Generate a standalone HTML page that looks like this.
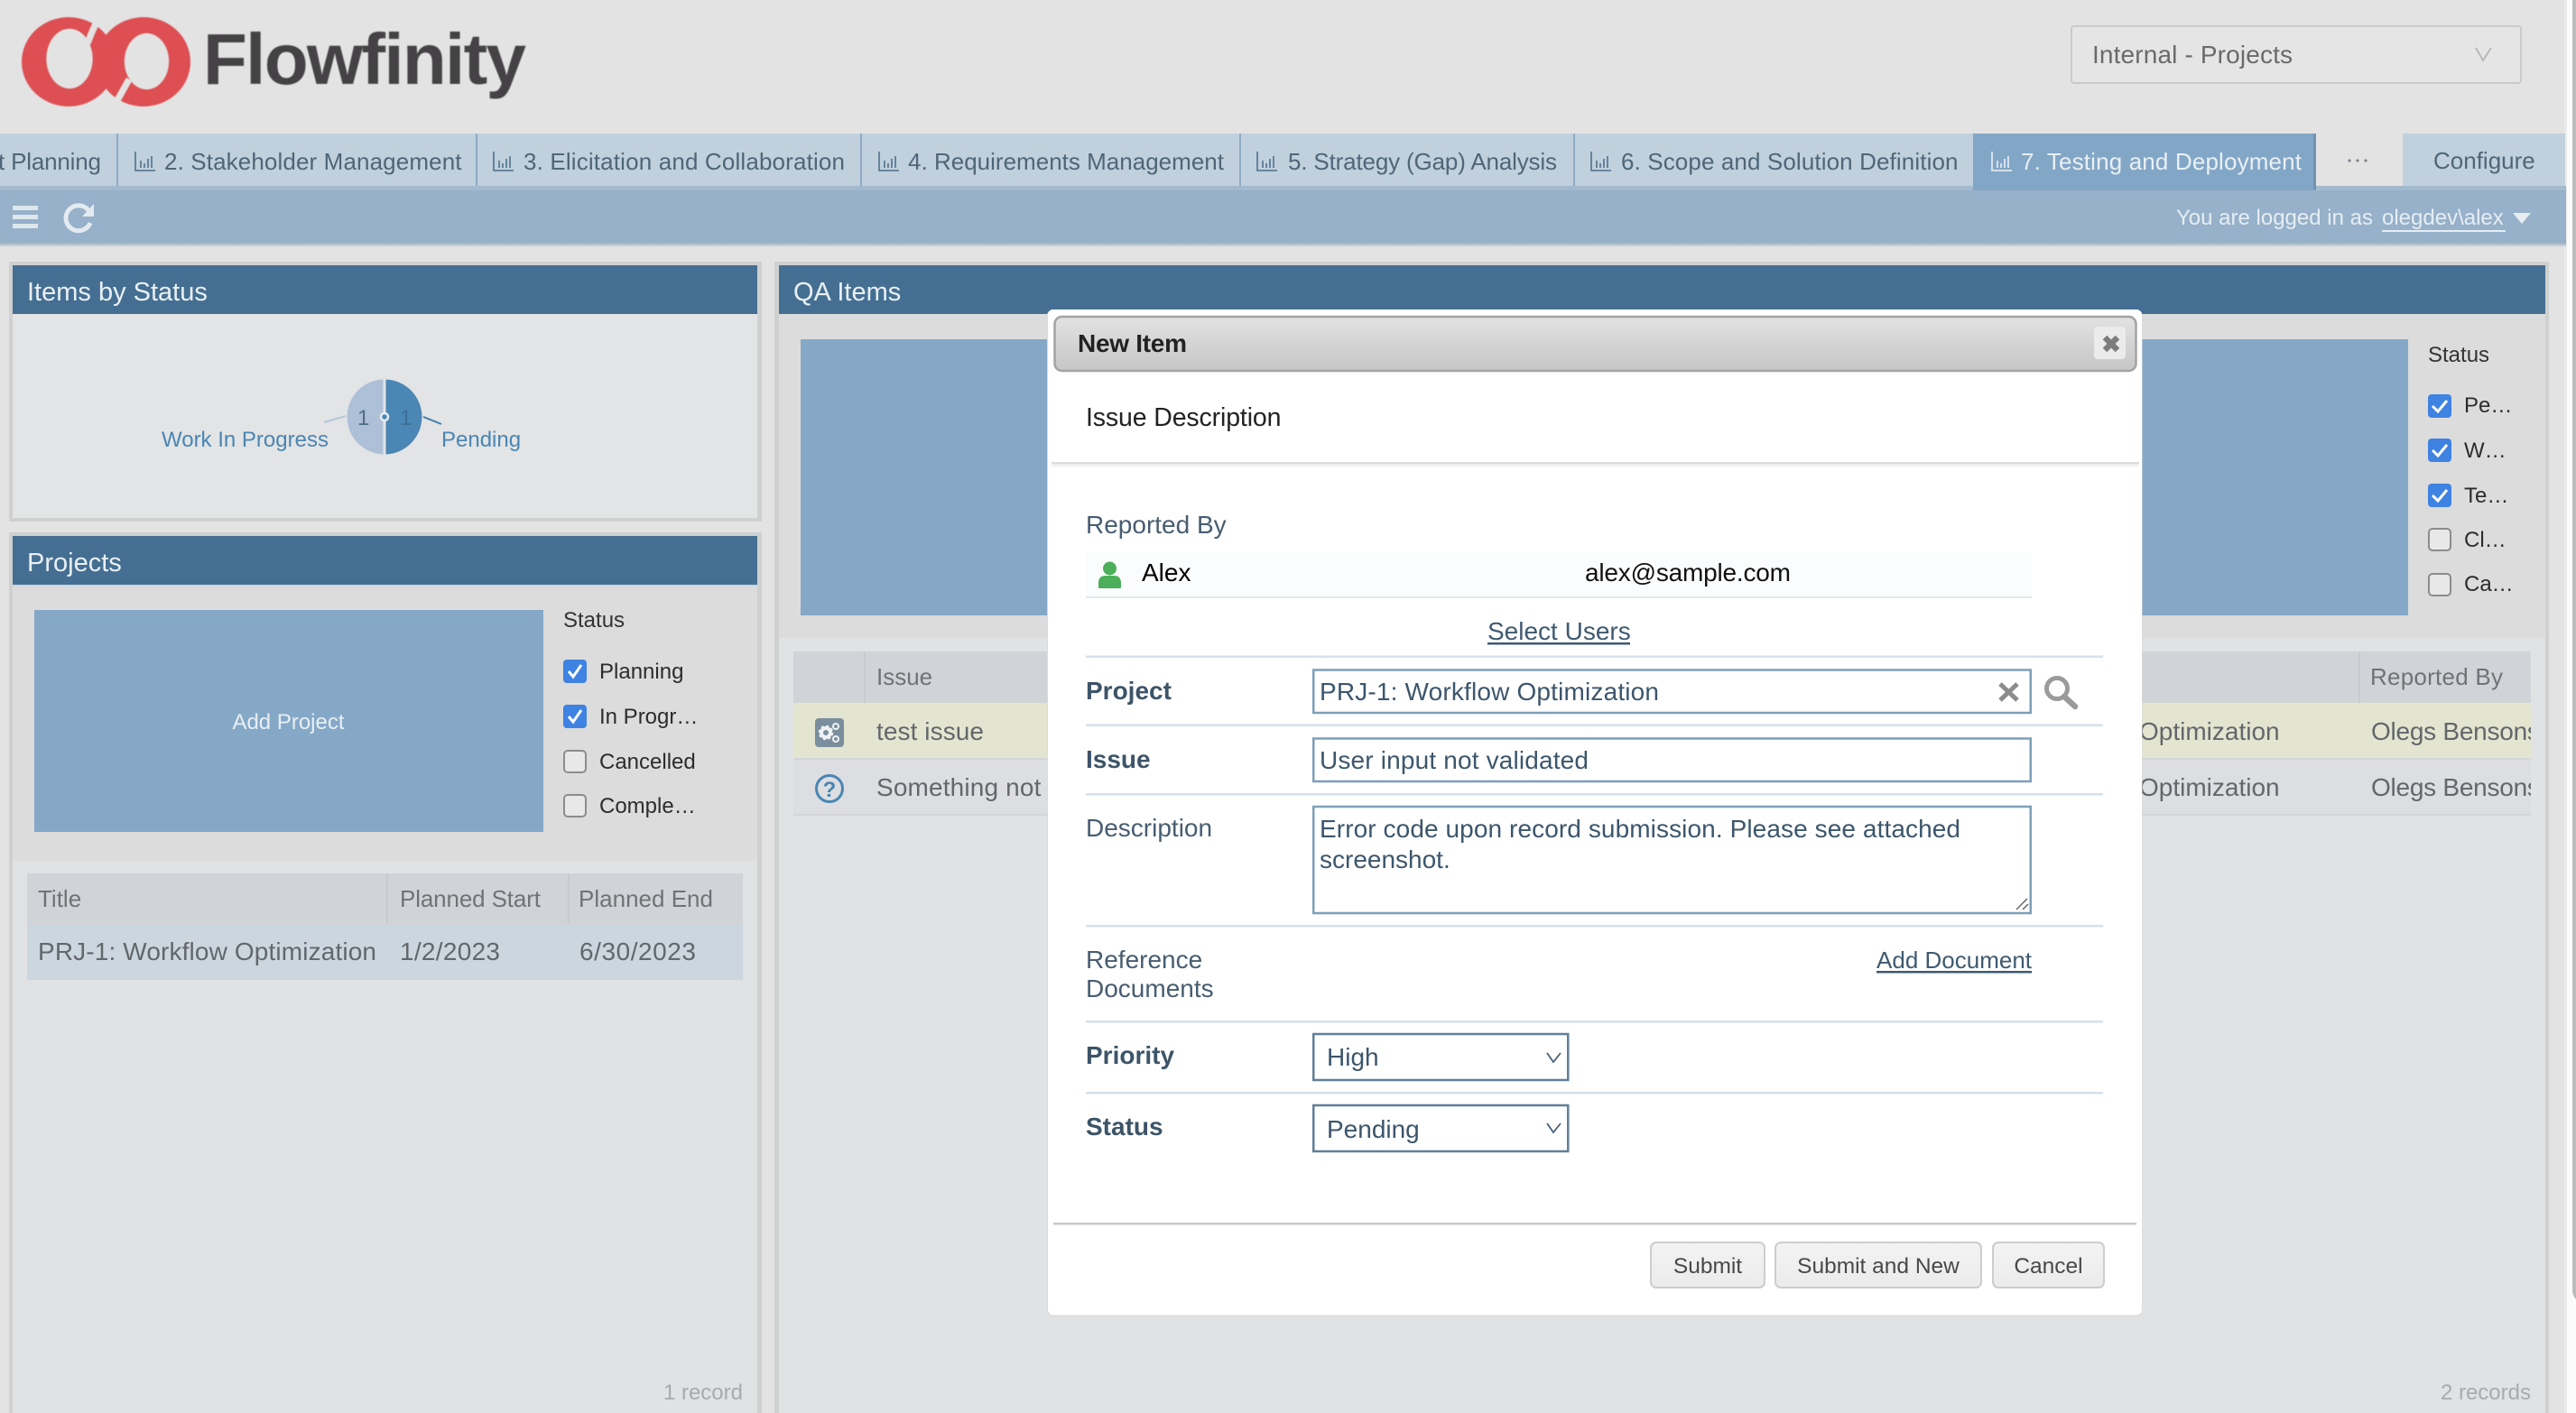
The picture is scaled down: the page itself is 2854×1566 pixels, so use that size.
<!DOCTYPE html>
<html lang="en">
<head>
<meta charset="utf-8">
<title>Flowfinity - New Item</title>
<style>
html,body{margin:0;padding:0;width:2854px;height:1566px;overflow:hidden;background:#e4e4e4}
svg{display:block;font-family:"Liberation Sans",Arial,sans-serif}
.tab{font-size:26px;fill:#4f6678}
.hd{font-size:29px;fill:#e9f0f5}
.col{font-size:26px;fill:#707375}
.cell{font-size:28px;fill:#62676b}
.cb{font-size:24px;fill:#2c2c2c}
.lbl{font-size:28px;fill:#475d70}
.blbl{font-size:28px;font-weight:700;fill:#3d5468}
.val{font-size:28px;fill:#3c566c}
.btn{font-size:24.5px;fill:#484848}
.ln{fill:#d6e1ea}
</style>
</head>
<body>
<svg width="2854" height="1566" viewBox="0 0 2854 1566" xmlns="http://www.w3.org/2000/svg">
<defs>
<linearGradient id="titleG" x1="0" y1="0" x2="0" y2="1"><stop offset="0" stop-color="#e2e2e2"/><stop offset="1" stop-color="#c6c6c6"/></linearGradient>
<linearGradient id="btnG" x1="0" y1="0" x2="0" y2="1"><stop offset="0" stop-color="#f3f3f3"/><stop offset="1" stop-color="#ebebeb"/></linearGradient>
<linearGradient id="shG" x1="0" y1="0" x2="0" y2="1"><stop offset="0" stop-color="#7d99b2"/><stop offset="1" stop-color="#e2e3e3"/></linearGradient>
<filter id="soft" x="-5%" y="-5%" width="110%" height="110%"><feGaussianBlur stdDeviation="0.6"/></filter>
<g id="bars" fill="none" stroke-width="1.8">
<path d="M1 0V21H23"/><path d="M7 10V18M11 13V18M15 8V18M19 5V18"/>
</g>
</defs>

<!-- page background -->
<rect width="2854" height="1566" fill="#e3e3e3"/>
<rect x="2841" y="0" width="3" height="1566" fill="#ebebeb"/>
<rect x="2844" y="0" width="10" height="1566" fill="#fbfbfb"/>
<path d="M2850 0H2854V1440Q2850 1436 2850 1430Z" fill="#bcbcbc"/>

<!-- logo -->
<g filter="url(#soft)">
<ellipse cx="76" cy="68.500" rx="52" ry="49.500" fill="#dd5053"/>
<ellipse cx="159" cy="68.500" rx="52" ry="49.500" fill="#dd5053"/>
<rect x="100" y="40" width="36" height="58" fill="#dd5053"/>
<ellipse cx="77" cy="65" rx="25.500" ry="33" fill="#e3e3e3"/>
<ellipse cx="162.500" cy="68" rx="24.500" ry="31" fill="#e3e3e3"/>
<path d="M97 48Q102 34 112 14" fill="none" stroke="#e3e3e3" stroke-width="7"/>
<path d="M143 88Q135 102 123 124" fill="none" stroke="#e3e3e3" stroke-width="7"/>
<text x="225" y="93" font-size="80" font-weight="700" textLength="358" lengthAdjust="spacing" fill="#454345">Flowfinity</text>
</g>

<!-- workspace select -->
<rect x="2295" y="29" width="498" height="63" rx="3" fill="#e5e5e5" stroke="#cacaca" stroke-width="2"/>
<text x="2318" y="70" font-size="28" fill="#6a6a6a" textLength="222">Internal - Projects</text>
<path d="M2743 53L2751 67L2760 53" fill="none" stroke="#b5b5b5" stroke-width="1.800"/>

<!-- nav tabs -->
<rect x="0" y="148" width="2186" height="62" fill="#c0d0dd"/>
<rect x="2662" y="148" width="180" height="62" fill="#c0d0dd"/>
<rect x="2186" y="148" width="380" height="63" fill="#82a6c6"/>
<rect x="2563" y="148" width="3" height="62" fill="#7393ad"/>
<g fill="#8eabc4">
<rect x="129" y="148" width="2" height="62"/><rect x="527" y="148" width="2" height="62"/>
<rect x="953" y="148" width="2" height="62"/><rect x="1373" y="148" width="2" height="62"/>
<rect x="1743" y="148" width="2" height="62"/>
</g>
<text class="tab" x="-2" y="188" textLength="114">t Planning</text>
<use href="#bars" x="149" y="168" stroke="#5d7c96"/><text class="tab" x="182" y="188" textLength="329.500">2. Stakeholder Management</text>
<use href="#bars" x="546" y="168" stroke="#5d7c96"/><text class="tab" x="580" y="188" textLength="356">3. Elicitation and Collaboration</text>
<use href="#bars" x="973" y="168" stroke="#5d7c96"/><text class="tab" x="1006" y="188" textLength="350">4. Requirements Management</text>
<use href="#bars" x="1392" y="168" stroke="#5d7c96"/><text class="tab" x="1427" y="188" textLength="298">5. Strategy (Gap) Analysis</text>
<use href="#bars" x="1762" y="168" stroke="#5d7c96"/><text class="tab" x="1796" y="188" textLength="373.500">6. Scope and Solution Definition</text>
<use href="#bars" x="2206" y="168" stroke="#dfe8f0"/><text class="tab" x="2239" y="188" textLength="311" style="fill:#e9f0f5">7. Testing and Deployment</text>
<g fill="#7a858e"><circle cx="2603" cy="178" r="1.600"/><circle cx="2612" cy="178" r="1.600"/><circle cx="2621" cy="178" r="1.600"/></g>
<text class="tab" x="2696" y="187">Configure</text>

<!-- toolbar -->
<rect x="0" y="206" width="2186" height="5" fill="#a3bace"/>
<rect x="2566" y="206" width="277" height="5" fill="#a3bace"/>
<rect x="0" y="211" width="2843" height="58" fill="#96b1c9"/>
<rect x="0" y="269" width="2843" height="5" fill="url(#shG)" opacity=".7"/>
<g fill="#dfe7ee"><rect x="14" y="228" width="28" height="5"/><rect x="14" y="238" width="28" height="5"/><rect x="14" y="248" width="28" height="5"/></g>
<path d="M98 233A14 14 0 1 0 100 247" fill="none" stroke="#e3eaf0" stroke-width="5"/>
<path d="M104 226V240H91Z" fill="#e3eaf0"/>
<text x="2411" y="249" font-size="24" fill="#e6edf3">You are logged in as</text>
<text x="2639" y="249" font-size="24" fill="#e6edf3">olegdev\alex</text>
<rect x="2639" y="255" width="137" height="2" fill="#e6edf3"/>
<path d="M2784 236H2804L2794 248Z" fill="#e8edf2"/>

<!-- left panel: Items by Status -->
<rect x="10" y="290" width="834" height="288" fill="#cfd0d0"/>
<rect x="14" y="294" width="825" height="280" fill="#e2e4e5"/>
<rect x="14" y="294" width="825" height="54" fill="#456f92"/>
<text class="hd" x="30" y="333">Items by Status</text>
<path d="M426 420.500A41.500 41.500 0 0 0 426 503.500Z" fill="#aec0d7"/>
<path d="M426 420.500A41.500 41.500 0 0 1 426 503.500Z" fill="#4b87b4"/>
<rect x="424.500" y="420" width="3" height="84" fill="#e2e4e5"/>
<circle cx="426" cy="462" r="4" fill="#4b87b4" stroke="#e8eef3" stroke-width="2.500"/>
<text x="396" y="471" font-size="24" fill="#4d6c8a">1</text>
<text x="443" y="471" font-size="24" fill="#3c6f96">1</text>
<path d="M359 468L383 461" stroke="#b5c6da" stroke-width="2"/>
<path d="M469 462L489 470" stroke="#3f7bab" stroke-width="2"/>
<text x="179" y="495" font-size="24" fill="#4a86b4">Work In Progress</text>
<text x="489" y="495" font-size="24" fill="#4a86b4">Pending</text>

<!-- left panel: Projects -->
<rect x="10" y="590" width="834" height="976" fill="#cfd0d0"/>
<rect x="14" y="594" width="825" height="972" fill="#e0e2e3"/>
<rect x="14" y="648" width="825" height="306" fill="#dcdcdc"/>
<rect x="14" y="594" width="825" height="54" fill="#456f92"/>
<rect x="14" y="648" width="825" height="2" fill="#c8d6e2"/>
<text class="hd" x="30" y="633">Projects</text>
<rect x="38" y="676" width="564" height="246" fill="#85a8c7"/>
<text x="319.500" y="808" text-anchor="middle" font-size="24" fill="#e8eff4">Add Project</text>
<text x="624" y="695" font-size="24" fill="#333">Status</text>
<g>
<rect x="624" y="731" width="26" height="26" rx="4" fill="#3e82e2"/><path d="M630 744L635 750L644 737" fill="none" stroke="#fff" stroke-width="3"/>
<rect x="624" y="781" width="26" height="26" rx="4" fill="#3e82e2"/><path d="M630 794L635 800L644 787" fill="none" stroke="#fff" stroke-width="3"/>
<rect x="625" y="832" width="24" height="24" rx="4" fill="#e8e8e8" stroke="#8c8c8c" stroke-width="2"/>
<rect x="625" y="881" width="24" height="24" rx="4" fill="#e8e8e8" stroke="#8c8c8c" stroke-width="2"/>
</g>
<text class="cb" x="664" y="752">Planning</text>
<text class="cb" x="664" y="802">In Progr…</text>
<text class="cb" x="664" y="852">Cancelled</text>
<text class="cb" x="664" y="901">Comple…</text>
<rect x="30" y="968" width="793" height="57" fill="#d0d4d8"/>
<rect x="30" y="1025" width="793" height="61" fill="#ccd6df"/>
<rect x="428" y="968" width="1.500" height="55" fill="#c4c8cc"/><rect x="629" y="968" width="1.500" height="55" fill="#c4c8cc"/>
<text class="col" x="42" y="1005">Title</text>
<text class="col" x="443" y="1005" textLength="156">Planned Start</text>
<text class="col" x="641" y="1005" textLength="149">Planned End</text>
<text class="cell" x="42" y="1064" textLength="375">PRJ-1: Workflow Optimization</text>
<text class="cell" x="443" y="1064" textLength="111">1/2/2023</text>
<text class="cell" x="642" y="1064" textLength="129">6/30/2023</text>
<text x="823" y="1551" text-anchor="end" font-size="24" fill="#a8aaac">1 record</text>

<!-- right panel: QA Items -->
<rect x="858" y="290" width="1966" height="1276" fill="#cfd0d0"/>
<rect x="863" y="294" width="1957" height="1272" fill="#e0e2e3"/>
<rect x="863" y="348" width="1957" height="359" fill="#dcdcdc"/>
<rect x="863" y="294" width="1957" height="54" fill="#456f92"/>
<text class="hd" x="879" y="333">QA Items</text>
<rect x="887" y="376" width="1781" height="306" fill="#85a8c7"/>
<text x="2690" y="401" font-size="24" fill="#333">Status</text>
<g>
<rect x="2690" y="437" width="26" height="26" rx="4" fill="#3e82e2"/><path d="M2695 450L2701 456L2711 444" fill="none" stroke="#fff" stroke-width="3"/>
<rect x="2690" y="486" width="26" height="26" rx="4" fill="#3e82e2"/><path d="M2695 499L2701 505L2711 493" fill="none" stroke="#fff" stroke-width="3"/>
<rect x="2690" y="536" width="26" height="26" rx="4" fill="#3e82e2"/><path d="M2695 549L2701 555L2711 543" fill="none" stroke="#fff" stroke-width="3"/>
<rect x="2691" y="586" width="24" height="24" rx="4" fill="#e8e8e8" stroke="#8c8c8c" stroke-width="2"/>
<rect x="2691" y="636" width="24" height="24" rx="4" fill="#e8e8e8" stroke="#8c8c8c" stroke-width="2"/>
</g>
<text class="cb" x="2730" y="457">Pe…</text>
<text class="cb" x="2730" y="507">W…</text>
<text class="cb" x="2730" y="557">Te…</text>
<text class="cb" x="2730" y="606">Cl…</text>
<text class="cb" x="2730" y="655">Ca…</text>
<rect x="879" y="722" width="1925" height="57" fill="#d0d4d8"/>
<rect x="879" y="779" width="1925" height="61" fill="#e4e5d0"/>
<rect x="879" y="840" width="1925" height="2" fill="#d3d6d9"/>
<rect x="879" y="842" width="1925" height="60" fill="#dcdee1"/>
<rect x="879" y="902" width="1925" height="2" fill="#d3d5d8"/>
<rect x="957" y="722" width="1.500" height="57" fill="#c4c8cc"/><rect x="2613" y="722" width="1.500" height="57" fill="#c4c8cc"/>
<text class="col" x="971" y="759">Issue</text>
<text class="col" x="2626" y="759" textLength="147">Reported By</text>
<rect x="903" y="796" width="32" height="32" rx="4" fill="#7b8e9d"/>
<circle cx="915" cy="812" r="5" fill="none" stroke="#eef2f5" stroke-width="4"/>
<circle cx="915" cy="812" r="7" fill="none" stroke="#eef2f5" stroke-width="2.500" stroke-dasharray="3 2.500"/>
<circle cx="926" cy="805" r="3" fill="none" stroke="#eef2f5" stroke-width="2"/>
<circle cx="926" cy="819" r="3" fill="none" stroke="#eef2f5" stroke-width="2"/>
<circle cx="919" cy="874" r="14.500" fill="none" stroke="#4a86b4" stroke-width="3"/>
<text x="919" y="883" text-anchor="middle" font-size="24" font-weight="700" fill="#4a86b4">?</text>
<text class="cell" x="971" y="820" textLength="119">test issue</text>
<text class="cell" x="971" y="882" letter-spacing=".15">Something not validated</text>
<text class="cell" x="2627" y="820" letter-spacing="-.25">Olegs Bensons</text>
<text class="cell" x="2627" y="882" letter-spacing="-.25">Olegs Bensons</text>
<rect x="2804" y="779" width="16" height="125" fill="#e0e2e3"/>
<text class="cell" x="2370" y="820">Optimization</text>
<text class="cell" x="2370" y="882">Optimization</text>
<text x="2804" y="1551" text-anchor="end" font-size="24" fill="#a8aaac">2 records</text>

<!-- modal -->
<rect x="1160" y="343" width="1213.500" height="1116" rx="7" fill="#d8dadc"/>
<rect x="1161" y="343" width="1212" height="1114.500" rx="6" fill="#fff"/>
<rect x="1168.500" y="351" width="1198" height="60" rx="8" fill="url(#titleG)" stroke="#a3a3a3" stroke-width="2.500"/>
<text x="1194" y="390" font-size="28" font-weight="700" fill="#222" textLength="121">New Item</text>
<rect x="2320" y="362" width="35" height="36" rx="4" fill="#ebebeb"/>
<path d="M2332 374L2346 388M2346 374L2332 388" stroke="#7c7c7c" stroke-width="6.500"/>
<text x="1203" y="472" font-size="28.500" fill="#222" textLength="216.500">Issue Description</text>
<rect x="1165" y="512" width="1205" height="2.500" fill="#dcdcdc"/>
<rect x="1165" y="514.500" width="1205" height="3" fill="#f3f3f3"/>

<text class="lbl" x="1203" y="591">Reported By</text>
<rect x="1203" y="612" width="1048" height="49" fill="#fbfcfd"/>
<rect x="1203" y="661" width="1048" height="2" fill="#e5e8ea"/>
<circle cx="1229.500" cy="630" r="7.500" fill="#4caf5a"/>
<path d="M1217 651V646Q1217 638 1225 638H1234Q1242 638 1242 646V651Q1242 652 1240 652H1219Q1217 652 1217 651Z" fill="#4caf5a"/>
<text x="1265" y="644" font-size="28" fill="#000">Alex</text>
<text x="1756" y="644" font-size="28" fill="#111" textLength="228">alex@sample.com</text>
<text x="1648" y="709" font-size="28" fill="#3f5a70">Select Users</text>
<rect x="1648" y="712" width="158" height="2.500" fill="#3f5a70"/>

<rect class="ln" x="1203" y="726.500" width="1127" height="2.500"/>
<text class="blbl" x="1203" y="775">Project</text>
<rect x="1455.250" y="742.500" width="794.500" height="47.500" fill="#fff" stroke="#7d9fb8" stroke-width="2.500"/>
<text class="val" x="1462" y="776" textLength="376">PRJ-1: Workflow Optimization</text>
<path d="M2216 758L2235 776M2235 758L2216 776" stroke="#8c8c8c" stroke-width="5"/>
<circle cx="2279" cy="763" r="11.500" fill="none" stroke="#9a9a9a" stroke-width="5"/>
<path d="M2287 772L2299 783" stroke="#9a9a9a" stroke-width="6.500" stroke-linecap="round"/>

<rect class="ln" x="1203" y="802.500" width="1127" height="2.500"/>
<text class="blbl" x="1203" y="851">Issue</text>
<rect x="1455.250" y="818.500" width="794.500" height="47.500" fill="#fff" stroke="#7d9fb8" stroke-width="2.500"/>
<text class="val" x="1462" y="852" textLength="298">User input not validated</text>

<rect class="ln" x="1203" y="879" width="1127" height="2.500"/>
<text class="lbl" x="1203" y="927">Description</text>
<rect x="1455.250" y="894" width="794.500" height="118" fill="#fff" stroke="#7d9fb8" stroke-width="2.500"/>
<text class="val" x="1462" y="928" textLength="710">Error code upon record submission. Please see attached</text>
<text class="val" x="1462" y="962">screenshot.</text>
<path d="M2234 1008L2246 996M2241 1008L2247 1002" stroke="#666" stroke-width="1.500"/>

<rect class="ln" x="1203" y="1025" width="1127" height="2.500"/>
<text class="lbl" x="1203" y="1073">Reference</text>
<text class="lbl" x="1203" y="1105">Documents</text>
<text x="2251" y="1073" text-anchor="end" font-size="26" fill="#3f5a70">Add Document</text>
<rect x="2079" y="1076" width="172" height="2.500" fill="#3f5a70"/>

<rect class="ln" x="1203" y="1131" width="1127" height="2.500"/>
<text class="blbl" x="1203" y="1179">Priority</text>
<rect x="1455.250" y="1146" width="282" height="51" fill="#fff" stroke="#5f7f98" stroke-width="2.500"/>
<text class="val" x="1470" y="1181">High</text>
<path d="M1714 1167L1721 1177L1729 1167" fill="none" stroke="#4a6074" stroke-width="1.800"/>

<rect class="ln" x="1203" y="1210" width="1127" height="2.500"/>
<text class="blbl" x="1203" y="1258">Status</text>
<rect x="1455.250" y="1225" width="282" height="51" fill="#fff" stroke="#5f7f98" stroke-width="2.500"/>
<text class="val" x="1470" y="1261">Pending</text>
<path d="M1714 1245L1721 1255L1729 1245" fill="none" stroke="#4a6074" stroke-width="1.800"/>

<rect x="1167" y="1355" width="1200" height="2.500" fill="#c9c9c9"/>
<rect x="1829" y="1377" width="126" height="50" rx="6" fill="url(#btnG)" stroke="#cdcdcd" stroke-width="2"/>
<rect x="1967" y="1377" width="228" height="50" rx="6" fill="url(#btnG)" stroke="#cdcdcd" stroke-width="2"/>
<rect x="2208" y="1377" width="123" height="50" rx="6" fill="url(#btnG)" stroke="#cdcdcd" stroke-width="2"/>
<text class="btn" x="1892" y="1411" text-anchor="middle">Submit</text>
<text class="btn" x="2081" y="1411" text-anchor="middle">Submit and New</text>
<text class="btn" x="2269.500" y="1411" text-anchor="middle">Cancel</text>
</svg>
</body>
</html>
